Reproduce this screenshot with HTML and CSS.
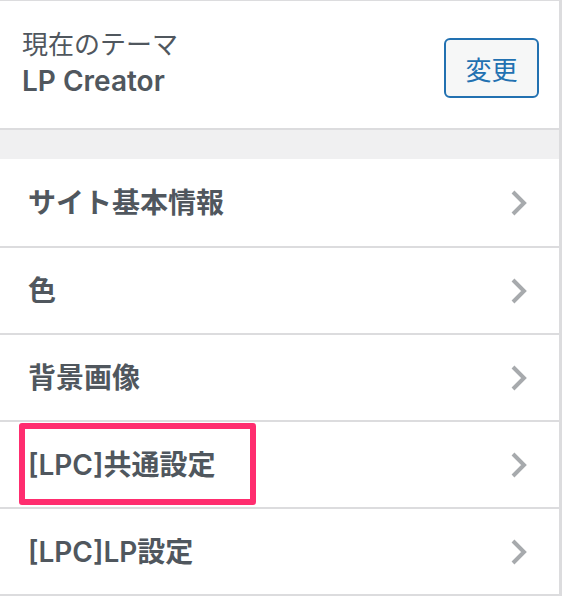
FILE: index.html
```html
<!DOCTYPE html>
<html lang="ja">
	<head>
		<meta charset="UTF-8" />
		<meta name="viewport" content="width=device-width, initial-scale=1.0" />
		<title>カスタマイズ</title>
		<link rel="stylesheet" href="styles.css">
	</head>
	<body>
		<div class="panel">
			<div class="theme-info">
				<div class="theme-text">
					<span class="theme-label">現在のテーマ</span>
					<strong class="theme-name">LP Creator</strong>
				</div>
				<button class="change-btn">変更</button>
			</div>

			<div class="gap"></div>

			<ul class="section-list">
				<li class="row">
					<span class="row-title">サイト基本情報</span>
					<svg class="chevron" viewBox="0 0 16 26"><polyline points="2,2 13,13 2,24" /></svg>
				</li>
				<li class="row">
					<span class="row-title">色</span>
					<svg class="chevron" viewBox="0 0 16 26"><polyline points="2,2 13,13 2,24" /></svg>
				</li>
				<li class="row">
					<span class="row-title">背景画像</span>
					<svg class="chevron" viewBox="0 0 16 26"><polyline points="2,2 13,13 2,24" /></svg>
				</li>
				<li class="row">
					<span class="row-title">[LPC]共通設定</span>
					<svg class="chevron" viewBox="0 0 16 26"><polyline points="2,2 13,13 2,24" /></svg>
					<!-- highlight annotation -->
					<div class="highlight"></div>
				</li>
				<li class="row">
					<span class="row-title">[LPC]LP設定</span>
					<svg class="chevron" viewBox="0 0 16 26"><polyline points="2,2 13,13 2,24" /></svg>
				</li>
			</ul>
		</div>
	</body>
</html>
```

FILE: styles.css
```css
body {
	margin: 0;
	background: #dcdcde;
	font-family: "Inter", "Noto Sans CJK JP", sans-serif;
	color: #50575e;
	overflow: hidden;
}

.panel {
	width: 559px;
	height: 596px;
	background: #f0f0f1;
	border-top: 1px solid #dcdcde;
	box-sizing: border-box;
}

/* current theme */
.theme-info {
	display: flex;
	align-items: center;
	justify-content: space-between;
	height: 127px;
	padding: 0 20px 0 22px;
	background: #fff;
	border-bottom: 2px solid #dcdcde;
}

.theme-text {
	display: flex;
	flex-direction: column;
	margin-top: -4px;
}

.theme-label {
	font-size: 26px;
	line-height: 37px;
}

.theme-name {
	font-size: 28px;
	line-height: 37px;
	font-weight: 600;
}

.change-btn {
	width: 95px;
	height: 60px;
	margin-top: 7px;
	background: #f6f7f7;
	border: 2px solid #2271b1;
	border-radius: 6px;
	color: #2271b1;
	font-family: inherit;
	font-size: 26px;
	padding: 0;
	cursor: pointer;
}

.gap {
	height: 29px;
}

/* sections */
.section-list {
	list-style: none;
	margin: 0;
	padding: 0;
	background: #fff;
}

.row {
	position: relative;
	display: flex;
	align-items: center;
	justify-content: space-between;
	height: 85px;
	padding: 0 32px 0 28px;
	border-bottom: 2px solid #dcdcde;
}

.row:first-child {
	height: 87px;
}

.row-title {
	font-size: 28px;
	font-weight: 600;
	margin-top: -4px;
}

.chevron {
	width: 16px;
	height: 26px;
	fill: none;
	stroke: #a7aaad;
	stroke-width: 4;
}

.highlight {
	position: absolute;
	left: 19px;
	top: 1px;
	width: 237px;
	height: 82px;
	box-sizing: border-box;
	border: 6px solid #ff2d6f;
	border-radius: 3px;
}
```
